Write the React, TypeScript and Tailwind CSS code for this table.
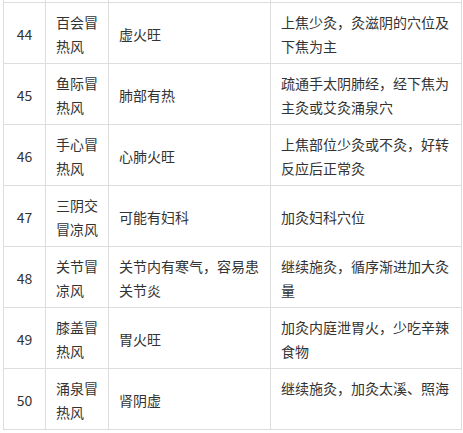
import React from "react";

type Row = { no: string; name: string; sign: string; moxa: string };

const rows: Row[] = [
  { no: "44", name: "百会冒热风", sign: "虚火旺", moxa: "上焦少灸，灸滋阴的穴位及下焦为主" },
  { no: "45", name: "鱼际冒热风", sign: "肺部有热", moxa: "疏通手太阴肺经，经下焦为主灸或艾灸涌泉穴" },
  { no: "46", name: "手心冒热风", sign: "心肺火旺", moxa: "上焦部位少灸或不灸，好转反应后正常灸" },
  { no: "47", name: "三阴交冒凉风", sign: "可能有妇科", moxa: "加灸妇科穴位" },
  { no: "48", name: "关节冒凉风", sign: "关节内有寒气，容易患关节炎", moxa: "继续施灸，循序渐进加大灸量" },
  { no: "49", name: "膝盖冒热风", sign: "胃火旺", moxa: "加灸内庭泄胃火，少吃辛辣食物" },
  { no: "50", name: "涌泉冒热风", sign: "肾阴虚", moxa: "继续施灸，加灸太溪、照海" },
];

const cell = "border border-[#dddddd] px-[10px] pt-[3px] pb-0 align-middle";

const App: React.FC = () => {
  return (
    <div
      className="bg-white w-[463px] h-[433px] overflow-hidden pl-[3px] text-[#333333] text-[14px] leading-[24px]"
      style={{ fontFamily: '"Microsoft YaHei", "Noto Sans CJK SC", sans-serif' }}
    >
      <table className="table-fixed border-collapse w-[458px]">
        <colgroup>
          <col className="w-[42px]" />
          <col className="w-[63px]" />
          <col className="w-[162px]" />
          <col className="w-[191px]" />
        </colgroup>
        <tbody>
          <tr>
            <td className="border-x border-[#dddddd] p-0 h-[2px]"></td>
            <td className="border-x border-[#dddddd] p-0 h-[2px]"></td>
            <td className="border-x border-[#dddddd] p-0 h-[2px]"></td>
            <td className="border-x border-[#dddddd] p-0 h-[2px]"></td>
          </tr>
          {rows.map((r) => (
            <tr key={r.no} className="h-[61px]">
              <td className={`${cell} text-center px-0`}>{r.no}</td>
              <td className={cell}>{r.name}</td>
              <td className={cell}>{r.sign}</td>
              <td className={cell}>
                {r.moxa}
                {r.no === "50" && (
                  <>
                    <br />
                    {"\u00a0"}
                  </>
                )}
              </td>
            </tr>
          ))}
        </tbody>
      </table>
    </div>
  );
};

export default App;
